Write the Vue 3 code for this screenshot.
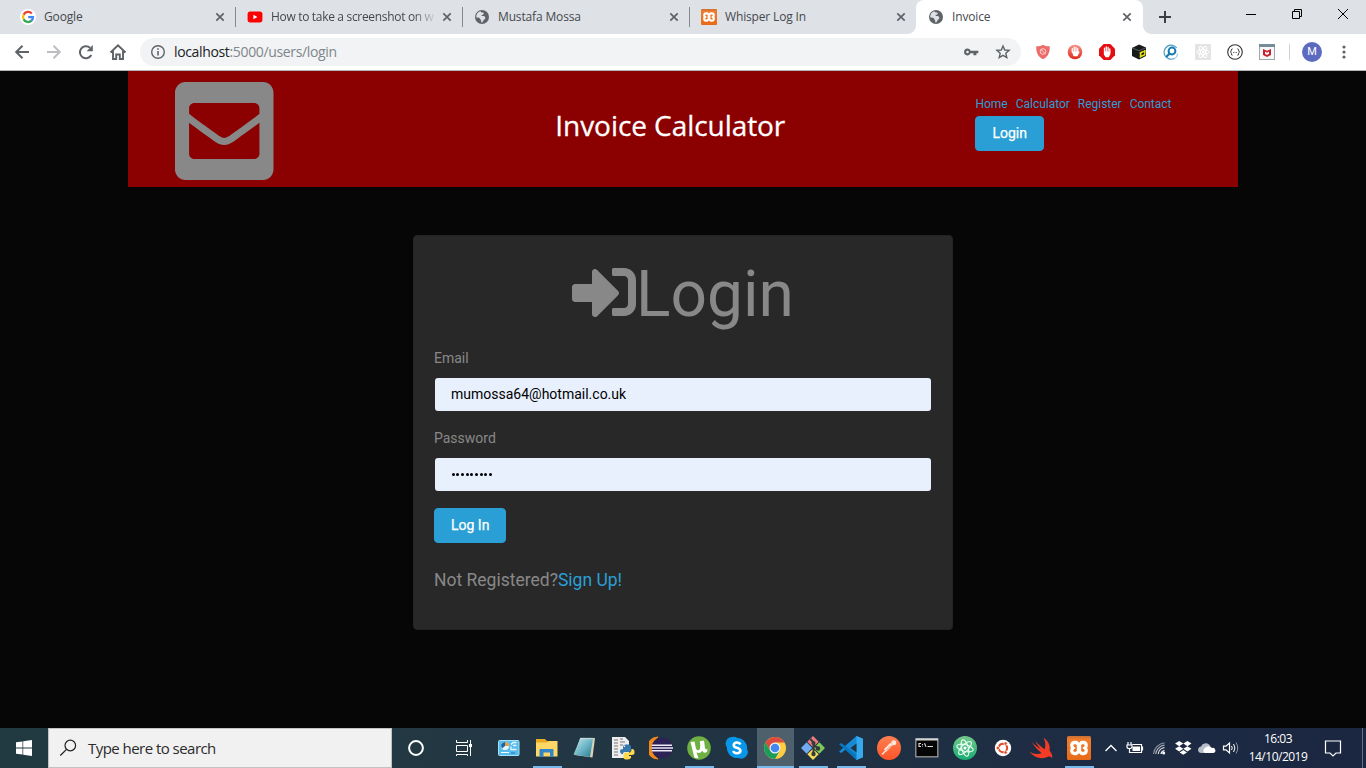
<script setup>
const tabs = [
  { title: 'Google', icon: 'google' },
  { title: 'How to take a screenshot on w', icon: 'youtube', fade: true },
  { title: 'Mustafa Mossa', icon: 'globe' },
  { title: 'Whisper Log In', icon: 'xampp' },
  { title: 'Invoice', icon: 'globe', active: true },
]
const links = ['Home', 'Calculator', 'Register', 'Contact']
</script>

<template>
  <div class="screen">
    <svg width="0" height="0" class="defs">
      <defs>
        <linearGradient id="xo" x1="0" y1="0" x2="0" y2="1"><stop offset="0" stop-color="#c96f35" /><stop offset=".15" stop-color="#ef7d2c" /><stop offset="1" stop-color="#e86a17" /></linearGradient>
        <linearGradient id="post" x1="0" y1="0" x2="0" y2="1"><stop offset="0" stop-color="#ff8052" /><stop offset="1" stop-color="#ff5427" /></linearGradient>
        <linearGradient id="atom" x1="0" y1="0" x2="0" y2="1"><stop offset="0" stop-color="#74c98b" /><stop offset="1" stop-color="#17ac72" /></linearGradient>
        <linearGradient id="note" x1="0" y1="0" x2="1" y2="1"><stop offset="0" stop-color="#c5e9ef" /><stop offset=".5" stop-color="#72b8c8" /><stop offset="1" stop-color="#207a91" /></linearGradient>
        <linearGradient id="stop" x1="0" y1="0" x2="0" y2="1"><stop offset="0" stop-color="#f79386" /><stop offset="1" stop-color="#df2718" /></linearGradient>
        <symbol id="xampp" viewBox="0 0 24 24">
          <rect width="24" height="24" rx="1.5" fill="url(#xo)" />
          <path d="M7.600 6.500H9.200C10.600 6.500 10.800 9 12 9S13.400 6.500 14.800 6.500H16.400C19.800 6.500 19.900 10.600 18 12C19.900 13.400 19.800 17.500 16.400 17.500H14.800C13.400 17.500 13.200 15 12 15S10.600 17.500 9.200 17.500H7.600C4.200 17.500 4.100 13.400 6 12C4.100 10.600 4.200 6.500 7.600 6.500Z" fill="none" stroke="#fff" stroke-width="3.300" />
          <path d="M9.800 12H14.200" stroke="#fff" stroke-width="4" />
        </symbol>
        <symbol id="globe" viewBox="0 0 16 16">
          <circle cx="8" cy="8" r="7" fill="#5f6368" />
          <path d="M6.5 2.2C7 4.2 10 2.700 9.800 4.600C9.600 6.100 7.600 5.500 7.300 7.100C9.600 6.800 11.600 7.200 11.300 9C11 10.800 9.700 10.200 9.400 11.600L8.300 13.600C6.800 13.900 7.400 12.400 7.100 11.600C6.900 10.200 5.900 10.400 5.800 9.200C4.900 8.200 3.200 9 2.200 8.200C2.100 5.200 3.700 2.800 6.500 2.200Z" fill="#dee1e6" />
        </symbol>
      </defs>
    </svg>

    <header class="tabs">
      <div v-for="(t, i) in tabs" :key="i" class="tab" :class="{ active: t.active, sep: i < 3 }">
        <svg v-if="t.icon === 'google'" class="fav" viewBox="0 0 16 16">
          <circle cx="8" cy="8" r="8" fill="#fff" />
          <g fill="none" stroke-width="2.3"><path d="M11.8 4.6A5 5 0 0 0 3.6 5.6" stroke="#ea4335" /><path d="M3.7 5.5A5 5 0 0 0 3.7 10.5" stroke="#fbbc05" /><path d="M3.6 10.4A5 5 0 0 0 11.5 11.6" stroke="#34a853" /><path d="M11.2 11.9A5 5 0 0 0 13 8.2H8.2" stroke="#4285f4" /></g>
        </svg>
        <svg v-else-if="t.icon === 'youtube'" class="fav" viewBox="0 0 16 16"><rect x=".6" y="2.6" width="14.8" height="10.8" rx="2.6" fill="#f00" /><path d="M6.4 5.7L10.4 8L6.4 10.3Z" fill="#fff" /></svg>
        <svg v-else class="fav" viewBox="0 0 16 16"><use :href="'#' + t.icon" width="16" height="16" /></svg>
        <span class="tab-title" :class="{ fade: t.fade }">{{ t.title }}</span>
        <svg class="tab-x" viewBox="0 0 10 10"><path d="M1.3 1.3L8.7 8.7M8.7 1.3L1.3 8.7" stroke="#5f6368" stroke-width="1.7" /></svg>
      </div>
      <svg class="plus" viewBox="0 0 14 14"><path d="M7 1V13M1 7H13" stroke="#3c4043" stroke-width="2" /></svg>
      <div class="win">
        <svg viewBox="0 0 46 28"><path d="M18 14.5H28" stroke="#000" /></svg>
        <svg viewBox="0 0 46 28"><path d="M18.5 11.5H25.5V18.5H18.5ZM20.5 11V9.5H27.5V16.5H26" fill="none" stroke="#000" /></svg>
        <svg viewBox="0 0 46 28"><path d="M18 9L28 19M28 9L18 19" stroke="#000" /></svg>
      </div>
    </header>

    <div class="toolbar">
      <div class="navs">
        <svg viewBox="0 0 32 32"><path d="M29 16H16.5M22.5 9.7L16.2 16L22.5 22.3" fill="none" stroke="#5f6368" stroke-width="2" /></svg>
        <svg viewBox="0 0 32 32"><path d="M15 16H27.5M21.5 9.7L27.8 16L21.5 22.3" fill="none" stroke="#bcbec1" stroke-width="2" /></svg>
        <svg viewBox="0 0 32 32"><path d="M27.3 19A6 6 0 1 1 26 11.8" fill="none" stroke="#5f6368" stroke-width="2" /><path d="M28.8 9V15.2H22.6Z" fill="#5f6368" /></svg>
        <svg viewBox="0 0 32 32"><path d="M14.5 16.5L22 9.4L29.5 16.5M17 15V23H20.2V18.5H23.8V23H27V15" fill="none" stroke="#5f6368" stroke-width="1.9" /></svg>
      </div>
      <div class="omni">
        <svg class="i16" viewBox="0 0 16 16"><circle cx="8" cy="8" r="6.3" fill="none" stroke="#5f6368" stroke-width="1.4" /><path d="M8 7V11.6M8 4.3V5.8" stroke="#5f6368" stroke-width="1.6" /></svg>
        <span class="url">localhost<i>:5000/users/login</i></span>
        <svg class="i16 key" viewBox="0 0 16 16"><path d="M4.5 4.6A3.4 3.4 0 1 0 7.6 9.3H10.4V11.2H13.4V9.3H15.3V6.7H7.6A3.4 3.4 0 0 0 4.5 4.6ZM4.5 6.7A1.3 1.3 0 1 1 4.5 9.3A1.3 1.3 0 1 1 4.5 6.7Z" fill="#5f6368" fill-rule="evenodd" /></svg>
        <svg class="i16" viewBox="0 0 16 16"><path d="M8 2L9.7 6L14.1 6.4L10.8 9.3L11.8 13.6L8 11.3L4.2 13.6L5.2 9.3L1.9 6.4L6.3 6Z" fill="none" stroke="#5f6368" stroke-width="1.4" /></svg>
      </div>
      <div class="exts">
        <svg viewBox="0 0 16 16"><path d="M8 .8C10 2 12.500 2.500 14.700 2.300C15.200 8 13 13 8 15.300C3 13 .8 8 1.300 2.300C3.500 2.500 6 2 8 .8Z" fill="#ed6b68" /><circle cx="8" cy="7.500" r="2.800" fill="none" stroke="#fbd5d3" /><path d="M6 5.500L10 9.500" stroke="#fbd5d3" /></svg>
        <svg viewBox="0 0 16 16"><circle cx="8" cy="8" r="7.300" fill="url(#stop)" /><path d="M5.300 8V4.600M7.200 7V3.200M9 7V3.500M10.700 8V4.700" stroke="#fff" stroke-width="1.300" stroke-linecap="round" /><path d="M4.700 7.200H11.300L12.600 8L10.500 12.300H6.500Z" fill="#fff" /></svg>
        <svg viewBox="0 0 16 16"><path d="M4.700 0H11.300L16 4.700V11.300L11.300 16H4.700L0 11.300V4.700Z" fill="#e50f12" /><path d="M5.500 8V4.200M7.300 7V3M9.100 7V3.500M10.800 8V5" stroke="#fff" stroke-width="1.300" stroke-linecap="round" /><path d="M4.900 7.200H11.400V10L9.800 13.200H6.600L4.900 10.500Z" fill="#fff" /></svg>
        <svg viewBox="0 0 16 16"><path d="M8 .5L15 3.500V12L8 15.500L1 12V4Z" fill="#161a19" /><path d="M1 4L8 6.700L15 3.700" fill="none" stroke="#59605b" /><path d="M8.800 8.300L14.500 6V7.600L8.800 10ZM8.800 12L14.500 9.600V11.200L8.800 13.800Z" fill="#e7df17" /><path d="M8.800 8.300L10.500 7.600V13L8.800 13.800ZM13 6.600L14.500 6V9.600L13 10.200Z" fill="#e7df17" /></svg>
        <svg viewBox="0 0 16 16"><path d="M13.700 4A7 7 0 1 0 11.200 14.500" fill="none" stroke="#4e9dc3" stroke-width="1.200" /><circle cx="9" cy="7" r="3.400" fill="none" stroke="#167bb0" stroke-width="2" /><path d="M6.600 9.500L3.200 13" stroke="#167bb0" stroke-width="2.200" /><path d="M14.500 9.500C14.300 12 13 14 11 15" fill="none" stroke="#86bcd3" /></svg>
        <svg viewBox="0 0 16 16"><rect width="16" height="16" fill="#e4e4e4" /><g fill="none" stroke="#fff"><ellipse cx="8" cy="8" rx="6" ry="2.300" /><ellipse cx="8" cy="8" rx="6" ry="2.300" transform="rotate(60 8 8)" /><ellipse cx="8" cy="8" rx="6" ry="2.300" transform="rotate(120 8 8)" /></g><circle cx="8" cy="8" r="1.200" fill="#fff" /></svg>
        <svg viewBox="0 0 16 16"><circle cx="8" cy="8" r="7.300" fill="#fff" stroke="#333" stroke-width="1.100" /><path d="M5.600 4.800Q4.400 4.800 4.400 6T3.400 8Q4.400 8 4.400 9.800T5.600 11.200M10.400 4.800Q11.600 4.800 11.600 6T12.600 8Q11.600 8 11.600 9.800T10.400 11.200" fill="none" stroke="#444" /><path d="M6 8.500H7M7.500 8.500H8.500M9 8.500H10" stroke="#777" /></svg>
        <svg viewBox="0 0 16 16"><rect x=".5" y=".5" width="15" height="15" fill="#f7f7f7" stroke="#9da6aa" /><path d="M0 0H16V3H0Z" fill="#748d99" /><path d="M4 5L8 6.800L12 5V11L8 13L4 11ZM6 7.600V9.800L8 10.900L10 9.800V7.600L8 8.700Z" fill="#c4202f" fill-rule="evenodd" /></svg>
      </div>
      <span class="bar-sep"></span>
      <span class="avatar">M</span>
      <svg class="i16 dots" viewBox="0 0 16 16"><g fill="#5f6368"><circle cx="8" cy="3" r="1.600" /><circle cx="8" cy="8" r="1.600" /><circle cx="8" cy="13" r="1.600" /></g></svg>
    </div>

    <main class="page">
      <section class="banner">
        <svg class="mail" viewBox="0 32 448 448" preserveAspectRatio="none"><path fill="#888" d="M400 32H48C21.490 32 0 53.490 0 80v352c0 26.510 21.490 48 48 48h352c26.510 0 48-21.490 48-48V80c0-26.510-21.490-48-48-48zM178.117 262.104C87.429 196.287 88.353 196.121 64 177.167V152c0-13.255 10.745-24 24-24h272c13.255 0 24 10.745 24 24v25.167c-24.371 18.969-23.434 19.124-114.117 84.938-10.500 7.655-31.392 26.120-45.883 25.894-14.503.218-35.367-18.227-45.883-25.895zM384 217.775V360c0 13.255-10.745 24-24 24H88c-13.255 0-24-10.745-24-24V217.775c13.958 10.794 33.329 25.236 95.303 70.214 14.162 10.341 37.975 32.145 64.697 32.010 26.887.134 51.036-22.041 64.720-32.025 61.958-44.964 81.325-59.408 95.280-70.199z" /></svg>
        <h1>Invoice Calculator</h1>
        <div class="menu">
          <nav><a v-for="l in links" :key="l">{{ l }}</a></nav>
          <button class="btn">Login</button>
        </div>
      </section>

      <section class="card">
        <h2>
          <svg viewBox="0 0 512 512"><path fill="#888" d="M416 448h-84c-6.600 0-12-5.400-12-12v-40c0-6.600 5.400-12 12-12h84c17.700 0 32-14.300 32-32V160c0-17.700-14.300-32-32-32h-84c-6.600 0-12-5.400-12-12V76c0-6.600 5.400-12 12-12h84c53 0 96 43 96 96v192c0 53-43 96-96 96zm-47-201L201 79c-15-15-41-4.500-41 17v96H24c-13.300 0-24 10.700-24 24v96c0 13.300 10.700 24 24 24h136v96c0 21.500 26 32 41 17l168-168c9.300-9.400 9.300-24.600 0-34z" /></svg><span>Login</span>
        </h2>
        <label>Email</label>
        <div class="field">mumossa64@hotmail.co.uk</div>
        <label>Password</label>
        <div class="field dotsf"><b v-for="n in 9" :key="n"></b></div>
        <button class="btn">Log In</button>
        <p>Not Registered?<a>Sign Up!</a></p>
      </section>
    </main>

    <footer class="task">
      <div class="start"><svg viewBox="0 0 16 16"><path d="M0 2.300L6.500 1.400V7.600H0ZM7.200 1.200L16 0V7.600H7.200ZM0 8.400H6.500V14.600L0 13.700ZM7.200 8.400H16V16L7.200 14.800Z" fill="#fff" /></svg></div>
      <div class="search"><svg viewBox="0 0 18 18"><circle cx="11.300" cy="6.500" r="5.300" fill="none" stroke="#222" stroke-width="1.200" /><path d="M7.500 10.400L1.300 16.500" stroke="#222" stroke-width="1.300" /></svg><span>Type here to search</span></div>
      <div class="cell big"><svg viewBox="0 0 24 24"><circle cx="12" cy="12" r="6.900" fill="none" stroke="#fff" stroke-width="2" /></svg></div>
      <div class="cell big"><svg viewBox="0 0 24 24"><path d="M4.500 4V6.500H15.500V4M4.500 9.500H15.500V15.500H4.500ZM4.500 20V18.500H15.500V20M18.500 4V20" fill="none" stroke="#fff" /><rect x="17" y="8" width="3" height="3" fill="#fff" /></svg></div>
      <div class="apps">
        <div class="cell"><svg viewBox="0 0 24 24"><rect x="1.500" y="4.500" width="20.500" height="15" rx="1" fill="#57bbec" stroke="#a4e1fa" /><circle cx="8" cy="10" r="4" fill="#e8f7fd" /><path d="M8 10V6A4 4 0 0 1 12 10Z" fill="#eb9b33" /><path d="M8 10V6A4 4 0 0 0 5 12.600Z" fill="#1565b7" /><path d="M14 8.500L16 6.500H19.500M16 9.500H19.500M14 10.500V13.500H19.500" fill="none" stroke="#e6f7ff" stroke-width="1.300" /><path d="M4 16.500H12" stroke="#fff" /><path d="M14 17H18" stroke="#1679b9" /></svg></div>
        <div class="cell on"><svg viewBox="0 0 24 24"><path d="M1 3H10L12 5H22V20H1Z" fill="#e9a920" /><path d="M1 6.500H12L14 5H22.500V20.500H1Z" fill="#ffd767" /><path d="M4.500 21V13.500Q4.500 13 5 13H18Q18.500 13 18.500 13.500V21H15V16.500H8.500V21Z" fill="#3286c7" /></svg></div>
        <div class="cell"><svg viewBox="0 0 24 24"><path d="M7 2.500L22 2L19.500 21.500L1.500 19Z" fill="#d7d2b5" /><path d="M7.500 2L20 2.500L17 21L.5 18.500Z" fill="url(#note)" /><path d="M7.500 2.500L20 2.500" stroke="#eee" stroke-width="1.500" stroke-dasharray="1 1" /></svg></div>
        <div class="cell"><svg viewBox="0 0 24 24"><path d="M1 1H14L18 5V22H1Z" fill="#eee" /><path d="M3 4H7M3 7H7M3 10H7M3 13H7M3 16H7M3 19H7M9 3H12M9 6H14M9 9H12" stroke="#777" /><path d="M12 13.500V11Q12 8.500 15 8.500H17Q20 8.500 20 11V14Q20 16 18 16H13.500Q12 16 12 18H10.500Q9 17 9 15Q9 13 12 13Z" fill="#3777ad" /><path d="M12.500 18Q13 16.500 15 16.500H19Q20.500 16 20.500 13H22Q24 14 23.500 17Q23.500 19 21 19H18V20H20V22Q18 24 15 23.500Q12.500 23.500 12.500 21Z" fill="#ffd94a" /><circle cx="13.500" cy="10.300" r=".8" fill="#fff" /></svg></div>
        <div class="cell"><svg viewBox="0 0 24 24"><path d="M9 1A11 11 0 0 0 9 23A13 13 0 0 1 9 1Z" fill="#f08a1b" stroke="#f08a1b" /><circle cx="13" cy="12" r="10.500" fill="#2c2255" /><path d="M2.800 9.200H23M2.300 12H24M2.800 14.800H23" stroke="#eceaf4" stroke-width="1.500" /></svg></div>
        <div class="cell on"><svg viewBox="0 0 24 24"><circle cx="12" cy="12" r="11.800" fill="#6fb043" /><path d="M3.500 6L7.500 5.500L8.800 12Q9.700 15 12 14Q14 13 12.800 5.200L17 4.500L18 12Q18.400 13.800 20.500 13L20 16Q16.500 17.800 15.300 14.800Q13.300 18 9.500 16.500L11.500 22Q9.500 22.600 7.300 21.400Z" fill="#fff" /></svg></div>
        <div class="cell"><svg viewBox="0 0 24 24"><path d="M7 1A6 6 0 0 1 12.500 2A10 10 0 0 1 22 13A6.500 6.500 0 0 1 13.500 22A10 10 0 0 1 2 11.500A6.500 6.500 0 0 1 7 1Z" fill="#0897e8" /><path d="M15.300 8.500Q14.500 6.500 11.800 6.500T8.700 9.200Q8.700 11 11.800 11.700T15.500 14.600Q15.300 17.200 12 17.200T8.400 14.900" fill="none" stroke="#fff" stroke-width="2.500" /></svg></div>
        <div class="cell lit"><svg viewBox="0 0 24 24"><circle cx="12" cy="12" r="11" fill="#ffcd42" /><path d="M2.500 6.500A11 11 0 0 1 21.500 6.500H12L7.300 14.800Z" fill="#dc4b3f" /><path d="M2.500 6.500A11 11 0 0 0 12 23L16.800 14.700H7.300Z" fill="#1a9d5a" /><circle cx="12" cy="12" r="5.500" fill="#f1f1f1" /><circle cx="12" cy="12" r="4.300" fill="#4387f2" /></svg></div>
        <div class="cell on"><svg viewBox="0 0 24 24"><g transform="rotate(45 12 12)"><rect x="3.500" y="3.500" width="8" height="8" fill="#ee7e7e" /><rect x="12.500" y="3.500" width="8" height="8" fill="#80ca58" /><rect x="3.500" y="12.500" width="8" height="8" fill="#72a9f1" /><rect x="12.500" y="12.500" width="8" height="8" fill="#f3dc55" /></g><path d="M9.500 3L12.500 6.500V18.500M12.500 8.500L17 12.500" fill="none" stroke="#333a3e" stroke-width="2" /><g fill="#333a3e"><circle cx="12.500" cy="7" r="2" /><circle cx="17" cy="12.500" r="2.200" /><circle cx="12.500" cy="18" r="2.200" /></g></svg></div>
        <div class="cell on"><svg viewBox="0 0 24 24"><path d="M17.500 0L24 2.800V21.200L17.500 24L6.500 13.500L2.300 17L0 15.800L6.500 9.600Z" fill="#168ad5" /><path d="M0 8.200L2.300 7L18 19V24Z" fill="#0877bd" /><path d="M17.500 0L24 2.800V21.200L17.500 24Z" fill="#35a8ee" /><path d="M17.500 7.500V16.500L11.500 12Z" fill="#22323f" /></svg></div>
        <div class="cell"><svg viewBox="0 0 24 24"><circle cx="12" cy="12" r="12" fill="url(#post)" /><path d="M5 18.500L13 10.500" stroke="#ffe6dc" stroke-width="1.500" /><path d="M8 14.500L14.500 8" stroke="#ffe6dc" stroke-width="3.200" /><circle cx="16.800" cy="6.800" r="2.500" fill="#ffe6dc" /><path d="M9 14.500L14 9.500" stroke="#f66e44" stroke-width=".8" /></svg></div>
        <div class="cell"><svg viewBox="0 0 24 24"><rect x=".8" y="2.800" width="22" height="18" fill="#050505" stroke="#9a9a9a" stroke-width="1.300" /><path d="M1 3.500H23" stroke="#d4d4d4" stroke-width="2" /><path d="M6 7.500H4V10.500H6M7.500 8V8.900M7.500 9.800V10.600M9.500 7.200L11 10.700M12.500 10.500H18" fill="none" stroke="#ddd" stroke-width="1.100" /></svg></div>
        <div class="cell"><svg viewBox="0 0 24 24"><circle cx="12" cy="12" r="12" fill="url(#atom)" /><g fill="none" stroke="#effff5" stroke-width="1.100"><ellipse cx="12" cy="12" rx="8.500" ry="3.300" transform="rotate(15 12 12)" /><ellipse cx="12" cy="12" rx="8.500" ry="3.300" transform="rotate(75 12 12)" /><ellipse cx="12" cy="12" rx="8.500" ry="3.300" transform="rotate(135 12 12)" /></g><circle cx="12" cy="12" r="1.600" fill="#fff" /></svg></div>
        <div class="cell"><svg viewBox="0 0 24 24"><circle cx="12" cy="12" r="8.200" fill="#fff" /><circle cx="12" cy="12" r="4.200" fill="none" stroke="#dd4a26" stroke-width="2" stroke-dasharray="7.800 1" stroke-dashoffset="4" /><g fill="#dd4a26" stroke="#fff" stroke-width=".7"><circle cx="6.800" cy="12" r="1.700" /><circle cx="14.600" cy="7.500" r="1.700" /><circle cx="14.600" cy="16.500" r="1.700" /></g></svg></div>
        <div class="cell"><svg viewBox="0 0 24 24"><path d="M14.500 1.500C20 5.500 21.500 10.500 20.500 14.500C22.500 17 24 19.500 23 22C22 20.500 20.500 20 19 20.800C13 24 4.500 21.500.500 15.500C5 18.500 9.500 18.500 12.500 17C8.500 14 5 9.500 2.500 6C6 9 9 11.500 11.500 13C9.500 10.500 7.500 7.500 6 5C9.500 8.500 13 11.500 15.700 13.200C16.800 9.800 16.500 5.500 14.500 1.500Z" fill="#f33b25" /></svg></div>
        <div class="cell on"><svg viewBox="0 0 24 24"><use href="#xampp" width="24" height="24" /></svg></div>
      </div>
      <div class="tray">
        <svg viewBox="0 0 24 24"><path d="M6.500 15L12 9.500L17.500 15" fill="none" stroke="#fff" stroke-width="1.300" /></svg>
        <svg viewBox="0 0 24 24"><path d="M9.500 8.500H18.500V16.500H7M19.500 10.500V14.500M5 6V9M8 6V9M4 9H9V11Q9 12.500 6.500 12.500T4 11ZM6.500 12.500V16.500H8" fill="none" stroke="#fff" stroke-width="1.200" /><rect x="9.500" y="10.500" width="7.500" height="4.500" fill="#fff" /></svg>
        <svg viewBox="0 0 24 24"><g fill="none" stroke="#fff" stroke-width="1.200"><path d="M14 18A4 4 0 0 1 17.500 14.500" /><path d="M11.200 18A7 7 0 0 1 17.500 11.700" opacity=".85" /><path d="M8.700 18A10 10 0 0 1 17.500 9.200" opacity=".65" /><path d="M6.500 18A12.500 12.500 0 0 1 17.500 6.800" opacity=".45" /></g><circle cx="16.700" cy="17" r="1.500" fill="#fff" /></svg>
        <svg viewBox="0 0 24 24"><path d="M8.200 5L12.300 7.600L8.200 10.200L4.100 7.600ZM16.400 5L20.500 7.600L16.400 10.200L12.300 7.600ZM8.200 10.200L12.300 12.800L8.200 15.400L4.100 12.800ZM16.400 10.200L20.500 12.800L16.400 15.400L12.300 12.800ZM12.300 14L16 16.400L12.300 18.800L8.600 16.400Z" fill="#fff" /></svg>
        <svg viewBox="0 0 24 24"><path d="M4.300 16.500A3.400 3.400 0 0 1 6 10.500A5 5 0 0 1 14 8.500L15.500 10L9 17H6Z" fill="#b7bec9" /><path d="M9.500 17A3 3 0 0 1 10 12A4.300 4.300 0 0 1 17 12A2.500 2.500 0 0 1 18.500 17Z" fill="#fff" /></svg>
        <svg viewBox="0 0 24 24"><path d="M4.500 10.200H7L10.500 7V17L7 13.800H4.500Z" fill="none" stroke="#fff" stroke-width="1.200" /><path d="M12.500 10Q14 12 12.500 14" fill="none" stroke="#fff" /><path d="M14.600 8Q17.200 12 14.600 16" fill="none" stroke="#fff" /><path d="M17 6.500Q20.500 12 17 17.500" fill="none" stroke="#8b93a3" /></svg>
      </div>
      <div class="clock"><span>16:03</span><span>14/10/2019</span></div>
      <svg class="notif" viewBox="0 0 18 18"><path d="M1.500 2H16.500V14H12L9 17L6 14H1.500Z" fill="none" stroke="#fff" stroke-width="1.200" /></svg>
      <span class="edge"></span>
    </footer>
  </div>
</template>

<style>
html, body { margin: 0; background: #060606; overflow: hidden; }
</style>

<style scoped>
* { box-sizing: border-box; }
.screen { width: 1366px; height: 768px; display: flex; flex-direction: column; background: #060606; font-family: Roboto, sans-serif; overflow: hidden; }
.defs { position: absolute; }
svg { display: block; flex: none; }

.tabs { height: 34px; flex: none; display: flex; align-items: stretch; background: #dee1e6; padding-left: 8px; }
.tab { position: relative; width: 227px; display: flex; align-items: center; padding: 0 10px 0 12px; font: 12px/20px "Open Sans", sans-serif; color: #45494d; }
.tab.sep::after { content: ""; position: absolute; right: -1px; top: 7px; width: 1px; height: 20px; background: #85898e; }
.tab.active { background: #fff; border-radius: 8px 8px 0 0; padding-right: 11px; }
.tab.active::before, .tab.active::after { content: ""; position: absolute; bottom: 0; width: 8px; height: 8px; }
.tab.active::before { left: -8px; background: radial-gradient(circle at 0 0, #dee1e6 7.500px, #fff 8px); }
.tab.active::after { right: -8px; background: radial-gradient(circle at 100% 0, #dee1e6 7.500px, #fff 8px); }
.fav { width: 16px; height: 16px; margin-right: 8px; }
.tab-title { flex: 1; min-width: 0; margin-right: 7px; white-space: nowrap; letter-spacing: -0.150px; }
.tab-title.fade { letter-spacing: -0.320px; margin-right: 5px; -webkit-mask-image: linear-gradient(90deg, #000 142px, transparent 166px); mask-image: linear-gradient(90deg, #000 142px, transparent 166px); }
.tab-x { width: 10px; height: 10px; }
.plus { width: 14px; height: 14px; margin: 10px 0 0 15px; }
.win { margin-left: auto; display: flex; }
.win svg { width: 46px; height: 28px; }

.toolbar { height: 37px; flex: none; display: flex; align-items: center; background: #fff; border-bottom: 1px solid #b4b5b8; }
.navs { display: flex; width: 140px; }
.navs svg { width: 32px; height: 32px; }
.omni { width: 881px; height: 28px; border-radius: 14px; background: #f1f3f4; display: flex; align-items: center; padding: 0 10px; }
.i16 { width: 16px; height: 16px; }
.url { margin-left: 8px; font: 14px/20px "Open Sans", sans-serif; color: #202124; letter-spacing: -0.350px; }
.url i { font-style: normal; color: #80868b; }
.key { margin: 0 16px 0 auto; }
.exts { display: flex; gap: 16px; margin-left: 14px; }
.exts svg { width: 16px; height: 16px; }
.bar-sep { width: 1px; height: 16px; background: #cfd1d4; margin-left: 14px; }
.avatar { width: 20px; height: 20px; border-radius: 50%; background: #5c6bc0; color: #fff; margin-left: 12px; font: 11px/20px Roboto, sans-serif; text-align: center; }
.dots { margin-left: 14px; }

.page { flex: 1; display: flex; flex-direction: column; align-items: center; }
.banner { width: 1110px; height: 116px; background: #8b0000; display: flex; align-items: flex-start; padding-left: 47.300px; }
.mail { width: 98.500px; height: 98px; margin-top: 11px; }
h1 { margin: 35px 0 0 281.500px; width: 420.200px; font: 28px/38px "Open Sans", sans-serif; color: #fff; letter-spacing: -0.060px; -webkit-text-stroke: .3px #fff; white-space: nowrap; }
.menu { padding-top: 24px; }
.menu nav { display: flex; gap: 8px; font-size: 12px; line-height: 18px; color: #2a9fd6; margin-bottom: 3px; letter-spacing: -0.020px; }
.btn { display: block; height: 35px; border: 1px solid #2a9fd6; border-radius: 4px; background: #2a9fd6; color: #fff; padding: 6px 16px; font: 400 14px/21px Roboto, sans-serif; -webkit-text-stroke: .25px #fff; white-space: nowrap; }

.card { width: 540px; height: 395px; margin-top: 48px; background: #282828; border: 1px solid #232323; border-radius: 4px; padding: 20px; color: #888; font-size: 14px; line-height: 21px; }
h2 { margin: 0 0 15px; height: 77px; display: flex; justify-content: center; align-items: center; font-size: 64px; line-height: 77px; font-weight: 400; }
h2 svg { width: 64px; height: 64px; margin-top: -5px; }
label { display: block; height: 21px; margin: 0 0 8px; }
.field { height: 35px; margin-bottom: 16px; background: #e8f0fe; background-clip: padding-box; border: 1px solid transparent; border-radius: 4px; padding: 6px 16px; color: #000; font-size: 14px; }
.dotsf { display: flex; align-items: center; gap: 1.700px; padding: 0 16.500px 1px; }
.dotsf b { width: 3px; height: 3px; border-radius: 50%; background: #000; }
p { margin: 27px 0 0; font-size: 17.500px; line-height: 21px; }
p a { color: #2a9fd6; }

.task { height: 40px; flex: none; display: flex; background: linear-gradient(90deg, #213940 0%, #223743 40%, #1e2d43 75%, #1b2641 100%); color: #fff; }
.start { width: 48px; display: flex; align-items: center; justify-content: center; }
.start svg { width: 16px; height: 16px; }
.search { width: 344px; background: #f1f1f1; border: 1px solid #bfc1c2; display: flex; align-items: center; padding-left: 10px; font: 15px/20px "Open Sans", sans-serif; color: #2b2b2b; }
.search svg { width: 18px; height: 18px; margin-right: 11px; }
.search span { white-space: nowrap; letter-spacing: -0.540px; }
.cell { position: relative; width: 38px; height: 40px; display: flex; align-items: center; justify-content: center; }
.cell svg { width: 24px; height: 24px; }
.cell.big { width: 48px; }
.apps { display: flex; margin-left: 2px; }
.apps .cell { width: 38px; }
.cell.on::after, .cell.lit::after { content: ""; position: absolute; bottom: 0; left: 5px; width: 29px; height: 2px; background: #76b9ed; }
.cell.lit { background: linear-gradient(#4d606b, #4d606b) no-repeat 1px 0 / 37px 40px; }
.cell.lit::after { left: 1px; width: 37px; }
.tray { display: flex; align-items: center; margin-left: 1px; }
.tray svg { width: 24px; height: 24px; }
.clock { width: 72px; margin-left: -1px; font: 12px/18px "Open Sans", sans-serif; text-align: center; display: flex; flex-direction: column; padding-top: 2px; letter-spacing: -0.500px; }
.notif { width: 18px; height: 18px; margin: 11px 0 0 auto; }
.edge { width: 1px; background: #66708a; margin: 0 3px 0 20px; }
</style>
